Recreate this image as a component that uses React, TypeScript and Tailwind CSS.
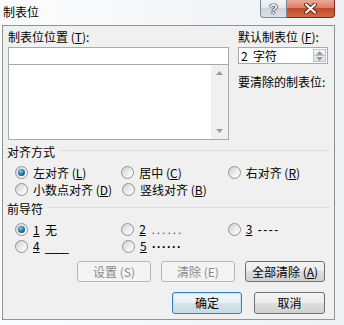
import type { ReactNode } from "react";

// Word "制表位" (Tabs) dialog, Windows 7 look

function Radio({ checked, children }: { checked?: boolean; children: ReactNode }) {
  return (
    <div className="flex h-[17px] w-[107px] items-center">
      <span className="flex h-[13px] w-[13px] shrink-0 items-center justify-center rounded-full border border-[#8f9194] bg-[linear-gradient(135deg,#cfd1d3_0%,#f4f4f4_70%,#ffffff_100%)]">
        {checked && (
          <span className="h-[7px] w-[7px] rounded-full bg-[radial-gradient(circle_at_40%_35%,#8fd0ee_0%,#2a79a8_45%,#0d3a5c_100%)]" />
        )}
      </span>
      <span className="ml-[5px] whitespace-pre text-[12px] leading-[17px] text-black">{children}</span>
    </div>
  );
}

function Btn({
  children,
  w,
  disabled,
  primary,
}: {
  children: ReactNode;
  w: string;
  disabled?: boolean;
  primary?: boolean;
}) {
  let cls =
    "border-[#707070] bg-[linear-gradient(to_bottom,#f3f3f3_0%,#ececec_50%,#dedede_50%,#d0d0d0_100%)] text-black";
  if (disabled) cls = "border-[#b5b9bc] bg-[#f4f4f4] text-[#8a8a8a]";
  if (primary)
    cls =
      "border-[#3c7fb1] bg-[linear-gradient(to_bottom,#f2f6f9_0%,#e8eef3_50%,#d8e3ea_50%,#cbd8e2_100%)] text-black shadow-[inset_0_0_0_1px_#bfe3f7]";
  return (
    <div className={`flex h-full items-center justify-center rounded-[3px] border text-[12px] ${w} ${cls}`}>
      {children}
    </div>
  );
}

function GroupHead({ title }: { title: string }) {
  return (
    <div className="flex h-[14px] items-center pl-[4px] pr-[4px]">
      <span className="text-[12px] leading-[14px] text-black">{title}</span>
      <div className="ml-[4px] mb-[3px] h-px flex-1 bg-[#dcdfe2]" />
    </div>
  );
}

function Tri({ up }: { up?: boolean }) {
  return (
    <svg width="7" height="4" viewBox="0 0 7 4">
      <path d={up ? "M0 4 L3.5 0 L7 4 Z" : "M0 0 L3.5 4 L7 0 Z"} fill="#9a9a9a" />
    </svg>
  );
}

const latin = "font-['Liberation_Sans',sans-serif]";

export default function App() {
  return (
    <div className="flex h-[325px] w-[344px] flex-col overflow-hidden bg-[linear-gradient(to_right,#fbfcfd,#eef1f4)] font-['Noto_Sans_CJK_SC','Noto_Sans',sans-serif]">
      {/* title bar */}
      <div className="flex h-[25px] shrink-0 items-start">
        <span className="ml-[3px] mt-[4px] text-[12px] leading-[16px] text-black">制表位</span>
        <div className="ml-auto mr-[9px] flex h-[18px]">
          <div className="flex w-[27px] items-center justify-center rounded-bl-[4px] border border-t-0 border-[#7c8794] bg-[linear-gradient(to_bottom,#f1f3f6_0%,#e2e6eb_50%,#cdd3da_50%,#dde2e8_100%)] font-['Liberation_Sans',sans-serif] text-[14px] font-bold leading-none text-[#eef1f4] [text-shadow:0_0_1px_#1f2833,0_0_1px_#1f2833,0_0_1px_#1f2833,0_0_1px_#1f2833]">
            ?
          </div>
          <div className="flex w-[48px] items-center justify-center rounded-br-[4px] border border-l-0 border-t-0 border-[#7a2a1c] bg-[linear-gradient(to_bottom,#e9a99b_0%,#d97a63_50%,#c24a2d_50%,#d36a46_100%)]">
            <svg width="13" height="11" viewBox="0 0 13 11">
              <path d="M2 1.5 L11 9.5 M11 1.5 L2 9.5" stroke="#5a1f14" strokeWidth="4" strokeLinecap="round" />
              <path d="M2 1.5 L11 9.5 M11 1.5 L2 9.5" stroke="#ffffff" strokeWidth="2.2" strokeLinecap="round" />
            </svg>
          </div>
        </div>
      </div>

      {/* client area */}
      <div className="ml-[2px] flex h-[295px] w-[333px] flex-col border border-[#8f9396] bg-[#f0f0f0]">
        {/* tab position / default */}
        <div className="mt-[4px] flex pl-[5px]">
          <div className="flex w-[221px] flex-col">
            <span className="h-[14px] text-[12px] leading-[14px] text-black">制表位位置 (<u>T</u>):</span>
            <div className="mt-[3px] h-[18px] border border-[#a7a9ad] bg-white" />
            <div className="flex h-[75px] border border-t-0 border-[#a7a9ad] bg-white">
              <div className="flex-1" />
              <div className="flex w-[17px] flex-col items-center justify-between bg-[#f0f0f0] py-[6px]">
                <Tri up />
                <Tri />
              </div>
            </div>
          </div>
          <div className="ml-[9px] flex w-[92px] flex-col">
            <span className="h-[14px] text-[12px] leading-[14px] text-black">默认制表位 (<u>F</u>):</span>
            <div className="mt-[3px] flex h-[17px] w-[90px] border border-[#a7a9ad] bg-white">
              <span className="flex-1 whitespace-pre pl-[2px] text-[12px] leading-[15px] text-black">2  字符</span>
              <div className="my-[1px] mr-[1px] flex w-[13px] flex-col border border-[#b7c3cf] bg-[linear-gradient(to_bottom,#f4f6f8,#dde3e9)]">
                <div className="flex flex-1 items-center justify-center border-b border-[#b7c3cf]">
                  <Tri up />
                </div>
                <div className="flex flex-1 items-center justify-center">
                  <Tri />
                </div>
              </div>
            </div>
            <span className="mt-[11px] h-[14px] text-[12px] leading-[14px] text-black">要清除的制表位:</span>
          </div>
        </div>

        {/* alignment */}
        <div className="mt-[5px]">
          <GroupHead title="对齐方式" />
        </div>
        <div className="mt-[5px] flex flex-col pl-[12px]">
          <div className="flex">
            <Radio checked>左对齐 (<u>L</u>)</Radio>
            <Radio>居中 (<u>C</u>)</Radio>
            <Radio>右对齐 (<u>R</u>)</Radio>
          </div>
          <div className="flex">
            <Radio>小数点对齐 (<u>D</u>)</Radio>
            <Radio>竖线对齐 (<u>B</u>)</Radio>
          </div>
        </div>

        {/* leader */}
        <div className="mt-[4px]">
          <GroupHead title="前导符" />
        </div>
        <div className="mt-[5px] flex flex-col pl-[12px]">
          <div className="flex">
            <Radio checked>
              <u>1</u>{"  "}无
            </Radio>
            <Radio>
              <u>2</u>{"  "}
              <span className={`${latin} tracking-[2px] text-[#444]`}>......</span>
            </Radio>
            <Radio>
              <u>3</u>{"  "}
              <span className={`${latin} tracking-[1.5px]`}>----</span>
            </Radio>
          </div>
          <div className="flex">
            <Radio>
              <u>4</u>{"  "}
              <span className={`${latin} tracking-[-1px]`}>____</span>
            </Radio>
            <Radio>
              <u>5</u>{"  "}
              <span className={`${latin} font-bold tracking-[1px]`}>{"\u00b7\u00b7\u00b7\u00b7\u00b7\u00b7"}</span>
            </Radio>
          </div>
        </div>

        {/* buttons */}
        <div className="mt-[6px] flex h-[21px] justify-end gap-[10px] pr-[9px]">
          <Btn w="w-[74px]" disabled>
            设置 (S)
          </Btn>
          <Btn w="w-[74px]" disabled>
            清除 (E)
          </Btn>
          <Btn w="w-[80px]">
            全部清除 (<u>A</u>)
          </Btn>
        </div>
        <div className="mt-[10px] flex h-[22px] justify-end gap-[12px] pr-[9px]">
          <Btn w="w-[70px]" primary>
            确定
          </Btn>
          <Btn w="w-[71px]">取消</Btn>
        </div>
      </div>
    </div>
  );
}
